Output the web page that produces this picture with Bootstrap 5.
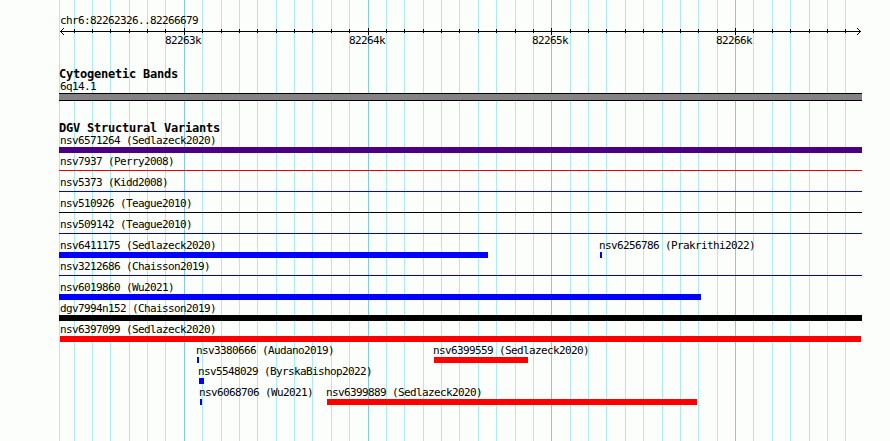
<!DOCTYPE html>
<html lang="en">
<head>
  <meta charset="UTF-8" />
  <title>chr6:82262326..82266679</title>
  <meta name="viewport" content="width=device-width, initial-scale=1" />
  <link href="https://cdn.jsdelivr.net/npm/bootstrap@5.3.0/dist/css/bootstrap.min.css" rel="stylesheet">
  <style>
    body { background-color: #fcfefc; color: #000; width: 890px; height: 441px; font-family: "DejaVu Sans Mono", "Liberation Mono", monospace; font-size: 11px; line-height: 14px; letter-spacing: -0.622px; }
    .browser-panel { width: 803px; height: 441px; margin-left: 59px; padding-top: 14px; white-space: nowrap; }
    .guides { z-index: 0; }
    .guide { grid-area: 1 / 1; width: 1px; background-color: #acecec; }
    .guide.major { background-color: #84cae8; }
    .tracks { z-index: 1; }
    .region { height: 12px; padding-left: 1px; }
    .ruler { height: 9px; }
    .ruler-labels { height: 12px; margin-top: -1px; }
    .ruler-labels span { grid-area: 1 / 1; }
    .track-title { font-size: 12px; font-weight: 700; line-height: 14px; height: 13px; letter-spacing: -0.224px; margin: 0; }
    .cyto { margin-top: 21px; }
    .cyto-name { height: 13px; padding-left: 1px; }
    .cyto-band { height: 8px; background-color: #848284; border: solid #000; border-width: 1px 0; }
    .variants { margin-top: 20px; }
    .lane { height: 21px; }
    .feature { grid-area: 1 / 1; }
    .feature-name { height: 13px; }
    .feature-bar { height: 6px; }
    .feature-bar.thin { height: 1px; margin-top: 2px; }
  </style>
</head>
<body>

  <div class="browser-panel position-relative">
    <div class="guides d-grid position-absolute top-0 start-0 w-100 h-100" id="guides"></div>

    <div class="tracks position-relative">
      <div class="region">chr6:82262326..82266679</div>
      <svg class="ruler d-block" id="ruler" width="803" height="9" viewBox="0 0 803 9" shape-rendering="crispEdges"></svg>
      <div class="ruler-labels d-grid" id="rulerLabels"></div>

      <section class="cyto">
        <h2 class="track-title">Cytogenetic Bands</h2>
        <div class="cyto-name">6q14.1</div>
        <div class="cyto-band"></div>
      </section>

      <section class="variants">
        <h2 class="track-title">DGV Structural Variants</h2>
        <div id="lanes"></div>
      </section>
    </div>
  </div>

  <script src="https://cdn.jsdelivr.net/npm/bootstrap@5.3.0/dist/js/bootstrap.bundle.min.js"></script>
  <script>
    // x offsets in pixels from the left edge of the panel
    const ticks = [15, 33, 51, 70, 88, 106, 125, 143, 162, 180, 198, 217, 235, 253, 272, 290, 309, 327, 345, 364, 382, 400,
      419, 437, 456, 474, 492, 511, 529, 547, 566, 584, 603, 621, 639, 658, 676, 694, 713, 731, 750, 768, 786];
    const majors = { 125: "82263k", 309: "82264k", 492: "82265k", 676: "82266k" };

    // one array per lane: [name, start, width, color, thin]
    const lanes = [
      [["nsv6571264 (Sedlazeck2020)", 0, 803, "#4b0082"]],
      [["nsv7937 (Perry2008)", 0, 803, "#e60000", true]],
      [["nsv5373 (Kidd2008)", 0, 803, "#0000ff", true]],
      [["nsv510926 (Teague2010)", 0, 803, "#000000", true]],
      [["nsv509142 (Teague2010)", 0, 803, "#0000cd", true]],
      [["nsv6411175 (Sedlazeck2020)", 0, 429, "#0000ff"], ["nsv6256786 (Prakrithi2022)", 541, 2, "#0000ff"]],
      [["nsv3212686 (Chaisson2019)", 0, 803, "#0000cd", true]],
      [["nsv6019860 (Wu2021)", 0, 642, "#0000ff"]],
      [["dgv7994n152 (Chaisson2019)", 0, 803, "#000000"]],
      [["nsv6397099 (Sedlazeck2020)", 1, 801, "#ff0000"]],
      [["nsv3380666 (Audano2019)", 138, 2, "#0000ff"], ["nsv6399559 (Sedlazeck2020)", 375, 94, "#ff0000"]],
      [["nsv5548029 (ByrskaBishop2022)", 140, 5, "#0000ff"]],
      [["nsv6068706 (Wu2021)", 141, 2, "#0000ff"], ["nsv6399889 (Sedlazeck2020)", 268, 370, "#ff0000"]]
    ];

    document.getElementById("guides").innerHTML = [0, ...ticks].map(x =>
      `<div class="guide ${majors[x] ? "major" : ""}" style="margin-left:${x}px"></div>`).join("");

    // ruler line, then the ticks and the stepped arrow heads
    let path = "M1 5.5H802";
    ticks.forEach(x => {
      path += majors[x] ? `M${x + 0.5} 2V9` : `M${x + 0.5} 3V7`;
    });
    for (let i = 1; i <= 3; i++) {
      path += `M${1 + i} ${5.5 - i}h1M${1 + i} ${5.5 + i}h1M${801 - i} ${5.5 - i}h1M${801 - i} ${5.5 + i}h1`;
    }
    document.getElementById("ruler").innerHTML = `<path d="${path}" fill="none" stroke="#000"/>`;

    document.getElementById("rulerLabels").innerHTML = Object.entries(majors).map(([x, label]) =>
      `<span style="margin-left:${x - 19}px">${label}</span>`).join("");

    // names never start left of the first pixel of the panel
    document.getElementById("lanes").innerHTML = lanes.map(lane => `
      <div class="lane d-grid">
        ${lane.map(([name, start, width, color, thin]) => `
          <div class="feature" style="margin-left:${start}px">
            <div class="feature-name" style="margin-left:${Math.max(1, start - 1) - start}px">${name}</div>
            <div class="feature-bar ${thin ? "thin" : ""}" style="width:${width}px;background-color:${color}"></div>
          </div>`).join("")}
      </div>`).join("");
  </script>
</body>
</html>
